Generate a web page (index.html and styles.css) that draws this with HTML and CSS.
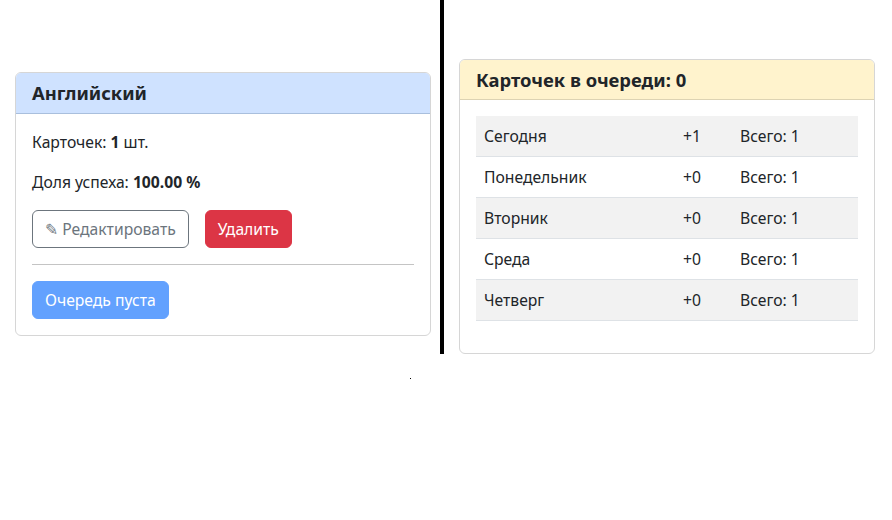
FILE: index.html
```html
<!DOCTYPE html>
<html lang="ru">
<head>
<meta charset="utf-8">
<link rel="stylesheet" href="styles.css">
</head>
<body>
<div class="row">
  <div class="col col-left">
    <div class="card">
      <div class="card-header header-blue">Английский</div>
      <div class="card-body">
        <p class="line">Карточек: <b>1</b> шт.</p>
        <p class="line">Доля успеха: <b>100.00 %</b></p>
        <div class="actions">
          <button class="btn btn-outline">✎ Редактировать</button>
          <button class="btn btn-danger">Удалить</button>
        </div>
        <hr class="sep">
        <button class="btn btn-primary-disabled">Очередь пуста</button>
      </div>
    </div>
  </div>
  <div class="col col-right">
    <div class="card">
      <div class="card-header header-yellow short">Карточек в очереди: 0</div>
      <div class="card-body">
        <div class="queue">
          <div class="qrow odd"><span>Сегодня</span><span>+1</span><span>Всего: 1</span></div>
          <div class="qrow"><span>Понедельник</span><span>+0</span><span>Всего: 1</span></div>
          <div class="qrow odd"><span>Вторник</span><span>+0</span><span>Всего: 1</span></div>
          <div class="qrow"><span>Среда</span><span>+0</span><span>Всего: 1</span></div>
          <div class="qrow odd"><span>Четверг</span><span>+0</span><span>Всего: 1</span></div>
        </div>
      </div>
    </div>
  </div>
</div>
<div class="dot-row"><span class="dot"></span></div>
</body>
</html>
```
FILE: styles.css
```css
* { box-sizing: border-box; }
html, body { margin: 0; padding: 0; background: #fff; }
body {
  font-family: "Noto Sans", "DejaVu Sans", sans-serif;
  font-size: 15.7px;
  line-height: 24px;
  color: #212529;
}
.row {
  display: grid;
  grid-template-columns: 444px 448px;
  align-items: stretch;
}
.col-left {
  border-right: 4px solid #000;
  padding: 72px 9px 0 15px;
}
.col-right {
  padding: 59px 17px 0 15px;
}
.card {
  width: 416px;
  border: 1px solid #d6d6d6;
  border-radius: 6px;
  background: #fff;
  overflow: hidden;
}
.card-header {
  height: 41px;
  padding: 0 16px;
  font-size: 18.4px;
  font-weight: 700;
  line-height: 40px;
  border-bottom: 1px solid;
}
.card-header.short { height: 40px; line-height: 39px; }
.header-blue { background: #cfe2ff; border-bottom-color: #a9bfdd; }
.header-yellow { background: #fff3cd; border-bottom-color: #ddd3b3; }
.card-body { padding: 16px; }
.line { margin: 0 0 16px; }
.actions { display: flex; gap: 16px; }
.btn {
  font-family: inherit;
  font-size: 15.7px;
  line-height: 24px;
  height: 38px;
  padding: 6px 12px;
  border-radius: 6px;
  border: 1px solid transparent;
  cursor: pointer;
}
.btn-outline { background: #fff; color: #6c757d; border-color: #6c757d; }
.btn-danger { background: #dc3545; color: #fff; border-color: #dc3545; }
.btn-primary-disabled { background: #62a1fe; color: #fff; border-color: #62a1fe; }
.sep { border: 0; border-top: 1px solid #c4c4c4; margin: 16px 0; }
.queue { margin-bottom: 16px; }
.qrow {
  display: grid;
  grid-template-columns: 199px 57px 1fr;
  height: 41px;
  align-items: center;
  border-bottom: 1px solid #dee2e6;
}
.qrow span { padding: 0 8px; }
.qrow.odd { background: #f2f2f2; }
.dot-row { position: relative; height: 30px; }
.dot { position: absolute; left: 410px; top: 24px; width: 1px; height: 1px; background: #000; }
```
